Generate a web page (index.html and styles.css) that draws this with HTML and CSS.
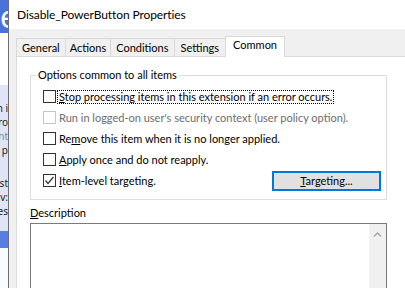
FILE: index.html
```html
<!DOCTYPE html>
<html lang="en">
<head>
<meta charset="utf-8">
<title>Disable_PowerButton Properties</title>
<link rel="stylesheet" href="styles.css">
</head>
<body>
<div class="screen">
  <div class="backdrop">
    <div class="bd-head"><span class="bd-e">e</span></div>
    <div class="bd-white"></div>
    <div class="bd-list">
      <div class="bd-line">n i</div>
      <div class="bd-line">ro</div>
      <div class="bd-line dim">nt</div>
      <div class="bd-line">p</div>
      <div class="bd-gap"></div>
      <div class="bd-line">st</div>
      <div class="bd-line">v:</div>
      <div class="bd-line">es</div>
    </div>
    <div class="bd-sel"></div>
    <div class="bd-rest"></div>
  </div>
  <div class="dialog">
    <div class="top-edge"></div>
    <div class="titlebar"><span class="title">Disable_PowerButton Properties</span></div>
    <div class="dlg-body">
      <div class="tabs">
        <div class="tab">General</div>
        <div class="tab narrow">Actions</div>
        <div class="tab">Conditions</div>
        <div class="tab wide">Settings</div>
        <div class="tab active">Common</div>
      </div>
      <div class="panel">
        <fieldset class="group">
          <legend class="group-title">Options common to all items</legend>
          <div class="row">
            <span class="box"></span>
            <span class="lbl focus"><u>S</u>top processing items in this extension if an error occurs.</span>
          </div>
          <div class="row disabled">
            <span class="box"></span>
            <span class="lbl">Run in logged-on user's security context (user policy option).</span>
          </div>
          <div class="row">
            <span class="box"></span>
            <span class="lbl">Re<u>m</u>ove this item when it is no longer applied.</span>
          </div>
          <div class="row">
            <span class="box"></span>
            <span class="lbl"><u>A</u>pply once and do not reapply.</span>
          </div>
          <div class="row split">
            <div class="row-main">
              <span class="box checked"><svg viewBox="0 0 11 11" width="11" height="11"><polyline points="1.5,5.5 4,8.5 9.5,2" fill="none" stroke="#333" stroke-width="1.2"/></svg></span>
              <span class="lbl"><u>I</u>tem-level targeting.</span>
            </div>
            <button class="btn" type="button"><u>T</u>argeting...</button>
          </div>
        </fieldset>
        <div class="desc-label"><u>D</u>escription</div>
        <div class="desc-box">
          <div class="desc-text"></div>
          <div class="vscroll">
            <svg class="chev" viewBox="0 0 9 5" width="9" height="5"><polyline points="1,4.5 4.5,1 8,4.5" fill="none" stroke="#a3a3a3" stroke-width="1.3"/></svg>
          </div>
        </div>
      </div>
    </div>
  </div>
</div>
</body>
</html>
```

FILE: styles.css
```css
* { box-sizing: border-box; }
html, body {
  margin: 0;
  padding: 0;
  width: 405px;
  height: 288px;
  overflow: hidden;
  background: #ffffff;
}
body {
  font-family: Lato, "Liberation Sans", sans-serif;
  font-size: 11px;
  color: #000;
}
.screen {
  display: flex;
  width: 405px;
  height: 288px;
  overflow: hidden;
}

/* background application strip */
.backdrop {
  flex: none;
  width: 8px;
  display: flex;
  flex-direction: column;
  overflow: hidden;
}
.bd-head {
  height: 33px;
  background: #4a72d8;
  display: flex;
  justify-content: flex-end;
  align-items: center;
  overflow: hidden;
}
.bd-e {
  color: #fff;
  font-size: 30px;
  line-height: 30px;
  font-family: "Noto Sans", sans-serif;
  margin-right: -9px;
}
.bd-white { height: 52px; background: #fff; }
.bd-list {
  height: 146px;
  background: #dfe4f6;
  padding-top: 16px;
  display: flex;
  flex-direction: column;
  align-items: flex-end;
  overflow: hidden;
}
.bd-line {
  white-space: nowrap;
  height: 14px;
  line-height: 14px;
  font-size: 10px;
  font-family: "Noto Sans", sans-serif;
  color: #222;
}
.bd-line.dim { color: #888; }
.bd-gap { height: 19px; }
.bd-sel { height: 17px; background: #587ee0; }
.bd-rest { flex: 1; background: #fafbff; }

/* dialog */
.dialog {
  flex: none;
  width: 420px;
  border-left: 1px solid #6d6d6d;
  display: flex;
  flex-direction: column;
  background: #f0f0f0;
}
.top-edge {
  height: 1px;
  background: linear-gradient(to right, #fff 0, #fff 182px, #2e3a59 182px);
}
.titlebar {
  height: 30px;
  background: #fff;
  padding-left: 8px;
  line-height: 29px;
}
.title { font-size: 12px; letter-spacing: -0.1px; }
.dlg-body {
  flex: 1;
  padding: 7px 0 0 7px;
  display: flex;
  flex-direction: column;
}
.tabs {
  display: flex;
  align-items: flex-end;
  height: 21px;
  margin-bottom: -1px;
  position: relative;
  z-index: 1;
}
.tab {
  height: 18px;
  margin-bottom: 1px;
  padding: 0 5px;
  line-height: 17px;
  border: 1px solid #d9d9d9;
  border-bottom: none;
  border-right: none;
  background: #f0f0f0;
  white-space: nowrap;
}
.tab.narrow { padding: 0 4px; }
.tab.wide { padding: 0 6px; }
.tab.active {
  height: 21px;
  margin-bottom: 0;
  padding: 0 7px;
  line-height: 16px;
  background: #fff;
  border-right: 1px solid #d9d9d9;
}
.panel {
  flex: 1;
  background: #fff;
  border: 1px solid #d9d9d9;
  border-right: none;
  display: flex;
  flex-direction: column;
  align-items: flex-start;
}

/* group box */
.group {
  margin: 10px 0 0 13px;
  width: 357px;
  padding: 3px 5px 8px 5px;
  border: 1px solid #dcdcdc;
  min-width: 0;
}
.group-title {
  padding: 0 2px;
  line-height: 16px;
  height: 16px;
}
.row {
  display: flex;
  align-items: center;
  height: 21px;
  padding-left: 7px;
}
.row.split { justify-content: space-between; }
.row-main { display: flex; align-items: center; }
.box {
  flex: none;
  width: 13px;
  height: 13px;
  border: 1px solid #333;
  background: #fff;
  display: flex;
  align-items: center;
  justify-content: center;
}
.box svg { display: block; }
.lbl {
  margin-left: 1px;
  padding: 0 1px;
  line-height: 12px;
  border: 1px solid transparent;
  white-space: nowrap;
}
.lbl.focus { border: 1px dotted #000; }
.row.disabled .box { border-color: #c6c6c6; }
.row.disabled .lbl { color: #6d6d6d; }

.btn {
  width: 109px;
  height: 20px;
  margin: 0;
  padding: 0;
  border: 2px solid #0078d7;
  background: #e1e1e1;
  font: inherit;
  color: #000;
  line-height: 14px;
}

/* description */
.desc-label {
  margin: 5px 0 0 13px;
  line-height: 16px;
  height: 16px;
}
.desc-box {
  margin: 2px 0 0 13px;
  width: 357px;
  height: 90px;
  border: 1px solid #7a7a7a;
  display: flex;
  flex: none;
}
.desc-text { flex: 1; background: #fff; }
.vscroll {
  width: 17px;
  background: #f0f0f0;
  display: flex;
  justify-content: center;
  align-items: flex-start;
  padding-top: 8px;
}
.chev { display: block; }
u { text-decoration: underline; text-underline-offset: 1px; }
```
